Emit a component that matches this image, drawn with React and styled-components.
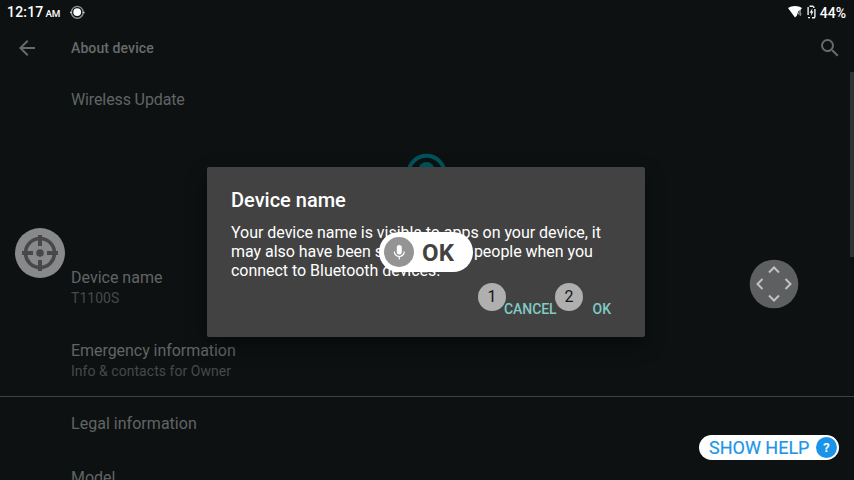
import React from 'react';
import styled, { createGlobalStyle } from 'styled-components';

const Global = createGlobalStyle`
  * { box-sizing: border-box; }
  body { margin: 0; background: #0d1112; overflow: hidden; }
`;

const Screen = styled.div`
  position: relative;
  display: flex;
  flex-direction: column;
  width: 854px;
  height: 480px;
  overflow: hidden;
  background: #0d1112;
  color: #fff;
  font-family: Roboto, sans-serif;
  svg { display: block; flex: none; }
`;

const StatusBar = styled.header`
  display: flex;
  flex: none;
  align-items: center;
  height: 24px;
  padding: 0 8px 0 7px;
  font-size: 14px;
  font-weight: 500;
  line-height: 24px;
`;

const Clock = styled.span`
  width: 63px;
  padding-top: 1px;
  letter-spacing: 0.2px;
  white-space: nowrap;
`;

const Meridiem = styled.small`
  margin-left: 2px;
  font-size: 9.8px;
  letter-spacing: -0.4px;
`;

const StatusIcons = styled.div`
  display: flex;
  gap: 4px;
  align-items: center;
  margin-left: auto;
`;

const BatteryLevel = styled.span`
  padding-top: 1px;
`;

const AppBar = styled.nav`
  display: flex;
  flex: none;
  align-items: center;
  height: 48px;
  padding: 0 12px 0 15px;
  color: #696b6b;
`;

const PageTitle = styled.h1`
  flex: 1;
  margin: 0 0 0 32px;
  font-size: 14px;
  font-weight: 500;
  letter-spacing: 0.1px;
`;

const Settings = styled.main`
  display: flex;
  flex: 1;
  flex-direction: column;
  min-height: 0;
  padding-top: 1px;
  overflow: hidden;
`;

const Row = styled.section`
  display: flex;
  flex: none;
  flex-direction: column;
  gap: 1px;
  height: ${(p) => (p.$tall ? 73 : 54)}px;
  padding: 16px 0 0 71px;
  border-bottom: ${(p) => (p.$divided ? '1px solid #3f4242' : 'none')};
`;

const RowTitle = styled.div`
  color: #626464;
  font-size: 16px;
  letter-spacing: ${(p) => p.$tracking || 0}px;
  line-height: 21px;
`;

const RowSummary = styled.div`
  color: #474949;
  font-size: 14px;
  letter-spacing: 0.04px;
  line-height: 19px;
`;

const Avatar = styled.div`
  display: flex;
  flex: none;
  justify-content: center;
  height: 124px;
  padding: 26px 2px 0 0;
`;

const Scrollbar = styled.i`
  position: absolute;
  top: 72px;
  right: 0;
  width: 4px;
  height: 185px;
  background: #303132;
`;

const Dialog = styled.section`
  position: absolute;
  top: 167px;
  left: 207px;
  display: flex;
  flex-direction: column;
  width: 438px;
  height: 170px;
  padding: 20px 24px 14px;
  border-radius: 2px;
  background: #424242;
  box-shadow: 0 8px 20px rgba(0, 0, 0, 0.4);
`;

const DialogTitle = styled.h2`
  margin: 0;
  font-size: 20px;
  font-weight: 500;
  line-height: 26px;
`;

const DialogText = styled.p`
  margin: 10px 0 0;
  font-size: 16px;
  letter-spacing: -0.03px;
  line-height: 19px;
  white-space: nowrap;
`;

const Actions = styled.div`
  display: flex;
  gap: 36px;
  justify-content: flex-end;
  margin-top: auto;
  padding-right: 10px;
`;

const Action = styled.button`
  padding: 0;
  border: 0;
  background: none;
  color: #80cbc4;
  font: 500 14px/28px Roboto, sans-serif;
  letter-spacing: -0.05px;
`;

const Marker = styled.span`
  position: absolute;
  top: 283px;
  left: ${(p) => p.$left}px;
  width: 28px;
  height: 28px;
  border-radius: 50%;
  background: #afafaf;
  color: #161616;
  font-size: 16px;
  line-height: 28px;
  text-align: center;
`;

const VoicePill = styled.div`
  position: absolute;
  top: 232px;
  left: 379px;
  display: flex;
  gap: 8px;
  align-items: center;
  width: 94px;
  height: 40px;
  padding-left: 5px;
  border-radius: 20px;
  background: #fff;
  color: #424242;
  font-size: 24px;
  font-weight: 700;
  letter-spacing: 0.3px;
  line-height: 40px;
`;

const VoiceLabel = styled.span`
  padding-top: 1px;
`;

const HelpButton = styled.button`
  position: absolute;
  top: 435px;
  left: 699px;
  display: flex;
  align-items: center;
  justify-content: space-between;
  width: 140px;
  height: 25px;
  padding: 0 2px 0 10px;
  border: 0;
  border-radius: 13px;
  background: #fff;
  color: #2196e8;
  font: 400 18px/25px Roboto, sans-serif;
  -webkit-text-stroke: 0.2px;
`;

const HelpBadge = styled.span`
  width: 21px;
  height: 21px;
  border-radius: 50%;
  background: #1b93e8;
  color: #fff;
  font-size: 13px;
  font-weight: 500;
  line-height: 21px;
  text-align: center;
`;

const Floating = styled.div`
  position: absolute;
  top: ${(p) => p.$top}px;
  left: ${(p) => p.$left}px;
`;

const TrackingIcon = () => (
  <svg width="16" height="16" viewBox="0 0 16 16">
    <circle cx="7.3" cy="8.3" r="5.9" fill="none" stroke="#8f9191" strokeWidth="1.4" />
    <path d="M0 8.5h2M12.6 8.5h2" stroke="#c5c5c5" strokeWidth="1.5" />
    <circle cx="7.2" cy="8.1" r="3.9" fill="#fff" />
  </svg>
);

const WifiIcon = () => (
  <svg width="15" height="14" viewBox="0 0 15 14">
    <path d="M0 3C3.5.2 10.5.2 14 3L12.4 5l-2 1.2-1.6 4.5L7 12.6Z" fill="#fff" />
    <path d="M12.3 5.2v5.8M12.3 5.6 10.2 9h3.4" fill="none" stroke="#999" strokeWidth="1" />
  </svg>
);

const BatteryIcon = () => (
  <svg width="9" height="14" viewBox="0 0 9 14">
    <path d="M2.5 1.2h4M1.1 2v8M7.9 4v8.5M1 12.6h2M5 12.8h3M6 2.2h1.5" fill="none" stroke="#f0f0f0" strokeWidth="1.4" />
    <path d="M5.4 3.2 2.7 7.8h1.7L3.8 11.2 6.4 6.4H5Z" fill="#fff" />
  </svg>
);

const BackIcon = () => (
  <svg width="24" height="24" viewBox="0 0 24 24" fill="currentColor">
    <path d="M20 11H7.83l5.59-5.59L12 4l-8 8 8 8 1.41-1.41L7.83 13H20v-2z" />
  </svg>
);

const SearchIcon = () => (
  <svg width="24" height="24" viewBox="0 0 24 24" fill="currentColor">
    <path d="M15.5 14h-.79l-.28-.27A6.47 6.47 0 0 0 16 9.5 6.5 6.5 0 1 0 9.5 16c1.61 0 3.09-.59 4.23-1.57l.27.28v.79l5 4.99L20.49 19l-4.99-5zm-6 0a4.5 4.5 0 1 1 0-9 4.5 4.5 0 0 1 0 9z" />
  </svg>
);

const ProfileIcon = () => (
  <svg width="42" height="42" viewBox="0 0 42 42">
    <circle cx="21.5" cy="21" r="18.2" fill="none" stroke="#02545c" strokeWidth="4" />
    <circle cx="21.5" cy="17" r="8" fill="#02545c" />
  </svg>
);

const CrosshairIcon = () => (
  <svg width="50" height="50" viewBox="0 0 50 50">
    <circle cx="25" cy="25" r="25" fill="#88898a" />
    <g fill="none" stroke="#484848" strokeWidth="4">
      <circle cx="25" cy="25" r="14.5" strokeWidth="3.5" />
      <path d="M25 7v11M25 32v11M7 25h11M32 25h11" />
    </g>
    <circle cx="25" cy="25" r="3.8" fill="#484848" />
  </svg>
);

const DirectionIcon = () => (
  <svg width="50" height="50" viewBox="0 0 50 50">
    <circle cx="25" cy="25" r="24.3" fill="#5e5f60" />
    <path d="M20 13.5l5-5 5 5M20 36.5l5 5 5-5M13.5 20l-5 5 5 5M36.5 20l5 5-5 5" fill="none" stroke="#c2c2c2" strokeWidth="2" />
  </svg>
);

const MicIcon = () => (
  <svg width="30" height="30" viewBox="0 0 30 30">
    <circle cx="15" cy="15" r="15" fill="#949494" />
    <rect x="12.8" y="8" width="5" height="9.5" rx="2.5" fill="#fff" />
    <path d="M10.3 14.5a5 5 0 0 0 10 0M15.3 19.3V22.5" fill="none" stroke="#fff" strokeWidth="1.2" />
  </svg>
);

export default function App() {
  return (
    <Screen>
      <Global />
      <StatusBar>
        <Clock>12:17<Meridiem>AM</Meridiem></Clock>
        <TrackingIcon />
        <StatusIcons>
          <WifiIcon />
          <BatteryIcon />
          <BatteryLevel>44%</BatteryLevel>
        </StatusIcons>
      </StatusBar>
      <AppBar>
        <BackIcon />
        <PageTitle>About device</PageTitle>
        <SearchIcon />
      </AppBar>
      <Settings>
        <Row><RowTitle $tracking={-0.12}>Wireless Update</RowTitle></Row>
        <Avatar><ProfileIcon /></Avatar>
        <Row $tall>
          <RowTitle>Device name</RowTitle>
          <RowSummary>T1100S</RowSummary>
        </Row>
        <Row $tall $divided>
          <RowTitle $tracking={-0.05}>Emergency information</RowTitle>
          <RowSummary>Info &amp; contacts for Owner</RowSummary>
        </Row>
        <Row><RowTitle $tracking={0.03}>Legal information</RowTitle></Row>
        <Row><RowTitle>Model</RowTitle></Row>
      </Settings>
      <Scrollbar />
      <Dialog role="dialog">
        <DialogTitle>Device name</DialogTitle>
        <DialogText>
          Your device name is visible to apps on your device, it<br />
          may also have been seen by other people when you<br />
          connect to Bluetooth devices.
        </DialogText>
        <Actions>
          <Action>CANCEL</Action>
          <Action>OK</Action>
        </Actions>
      </Dialog>
      <Marker $left={478}>1</Marker>
      <Marker $left={555}>2</Marker>
      <VoicePill><MicIcon /><VoiceLabel>OK</VoiceLabel></VoicePill>
      <Floating $top={228} $left={15}><CrosshairIcon /></Floating>
      <Floating $top={259} $left={749}><DirectionIcon /></Floating>
      <HelpButton>SHOW HELP<HelpBadge>?</HelpBadge></HelpButton>
    </Screen>
  );
}
